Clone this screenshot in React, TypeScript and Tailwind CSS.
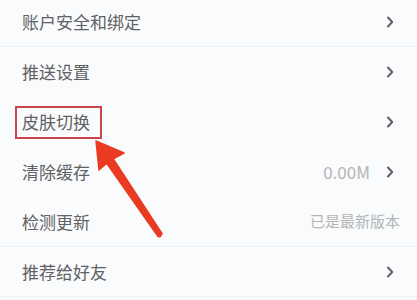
import React from 'react'

type Row = { label: string; value?: string; arrow?: boolean; line?: boolean; boxed?: boolean }

const rows: Row[] = [
  { label: '账户安全和绑定', arrow: true, line: true },
  { label: '推送设置', arrow: true },
  { label: '皮肤切换', arrow: true, boxed: true },
  { label: '清除缓存', value: '0.00M', arrow: true },
  { label: '检测更新', value: '已是最新版本', line: true },
  { label: '推荐给好友', arrow: true, line: true },
]

function Chevron() {
  return (
    <svg width="8" height="12" viewBox="0 0 8 12" className="shrink-0">
      <path d="M2 1.5 L6.2 6 L2 10.5" fill="none" stroke="#5e6063" strokeWidth="2" strokeLinecap="round" strokeLinejoin="round" />
    </svg>
  )
}

export default function App() {
  return (
    <div
      className="relative w-[417px] h-[300px] overflow-hidden bg-[#f9fbfc]"
      style={{ fontFamily: '"Noto Sans CJK SC", "Noto Sans", sans-serif' }}
    >
      <div className="-mt-[3px] flex flex-col">
        {rows.map((r) => (
          <div
            key={r.label}
            className={`flex items-center justify-between h-[50px] pl-[22px] pr-[23px] ${
              r.line ? 'border-b border-[#eef1f3]' : ''
            }`}
          >
            {r.boxed ? (
              <span className="-ml-[7px] pl-[5px] pr-[10px] h-[33px] flex items-center border-2 border-[#c9464c] text-[17px] text-[#5f6164]">
                {r.label}
              </span>
            ) : (
              <span className="text-[17px] text-[#5f6164]">{r.label}</span>
            )}
            <div className="flex items-center gap-[16px]">
              {r.value && (
                <span className={`text-[#b3b5b7] ${r.arrow ? 'text-[17px]' : 'text-[15px] -mr-[6px]'}`}>
                  {r.value}
                </span>
              )}
              {r.arrow && <Chevron />}
            </div>
          </div>
        ))}
      </div>

      {/* red arrow pointing at the boxed item */}
      <svg className="absolute left-0 top-0 pointer-events-none" width="417" height="300" viewBox="0 0 417 300">
        <polygon
          points="96,141 124,153 113.3,158.8 162.1,233.6 160,236.8 157.9,236.4 106.7,163.2 99,170"
          fill="#ea3a22"
          stroke="#ea3a22"
          strokeWidth="1.5"
          strokeLinejoin="round"
        />
      </svg>
    </div>
  )
}
